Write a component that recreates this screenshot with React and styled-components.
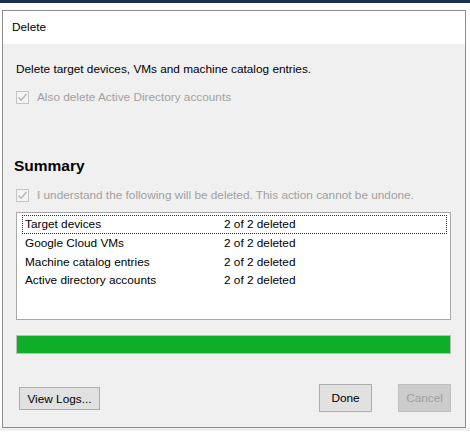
import React from "react";
import styled, { createGlobalStyle } from "styled-components";

const rows = [
  { name: "Target devices", status: "2 of 2 deleted" },
  { name: "Google Cloud VMs", status: "2 of 2 deleted" },
  { name: "Machine catalog entries", status: "2 of 2 deleted" },
  { name: "Active directory accounts", status: "2 of 2 deleted" },
];

function CheckBox() {
  return (
    <Box>
      <svg width="11" height="11" viewBox="0 0 11 11">
        <path d="M1.5 5.5 L4.2 8.2 L9.5 2" fill="none" stroke="#b4b4b4" strokeWidth="1.4" />
      </svg>
    </Box>
  );
}

function App() {
  return (
    <>
      <GlobalStyle />
      <TopStrip />
      <Page>
        <Dialog>
          <TitleBar>Delete</TitleBar>
          <Body>
            <Intro>Delete target devices, VMs and machine catalog entries.</Intro>
            <CheckRow top={13}>
              <CheckBox />
              <CheckLabel>Also delete Active Directory accounts</CheckLabel>
            </CheckRow>
            <Heading>Summary</Heading>
            <CheckRow top={13}>
              <CheckBox />
              <CheckLabel>I understand the following will be deleted. This action cannot be undone.</CheckLabel>
            </CheckRow>
            <ListBox>
              {rows.map((r, i) => (
                <ListRow key={r.name} focused={i === 0}>
                  <NameCell>{r.name}</NameCell>
                  <span>{r.status}</span>
                </ListRow>
              ))}
            </ListBox>
            <Progress>
              <ProgressFill style={{ width: "100%" }} />
            </Progress>
            <ButtonBar>
              <SmallButton>View Logs...</SmallButton>
              <Spacer />
              <Button>Done</Button>
              <Button disabled>Cancel</Button>
            </ButtonBar>
          </Body>
        </Dialog>
      </Page>
    </>
  );
}

const GlobalStyle = createGlobalStyle`
  body {
    margin: 0;
    background: #ffffff;
    font-family: "Liberation Sans", Arial, sans-serif;
    font-size: 11.8px;
    color: #000;
  }
`;

const TopStrip = styled.div`
  height: 3px;
  background: #1b2f4f;
`;

const Page = styled.div`
  padding: 7px 0 0 2px;
  height: 428px;
  box-sizing: border-box;
  background: linear-gradient(to bottom, #ffffff 0, #ffffff 425px, #f0f0f0 425px);
`;

const Dialog = styled.div`
  width: 464px;
  height: 418px;
  box-sizing: border-box;
  border: 1px solid #8c8c8c;
  display: flex;
  flex-direction: column;
  background: #f0f0f0;
`;

const TitleBar = styled.div`
  height: 33px;
  background: #ffffff;
  padding-left: 9px;
  line-height: 33px;
`;

const Body = styled.div`
  flex: 1;
  padding: 18px 14px 0 13px;
  display: flex;
  flex-direction: column;
`;

const Intro = styled.div`
  line-height: 15px;
`;

const CheckRow = styled.div`
  display: flex;
  align-items: center;
  gap: 8px;
  margin-top: ${(p) => p.top}px;
`;

const Box = styled.span`
  width: 13px;
  height: 13px;
  box-sizing: border-box;
  border: 1px solid #c4c4c4;
  background: #f4f4f4;
  display: flex;
  align-items: center;
  justify-content: center;
`;

const CheckLabel = styled.span`
  color: #a0a0a0;
  line-height: 15px;
`;

const Heading = styled.div`
  font-size: 15.5px;
  font-weight: bold;
  margin: 52px 0 0 -2px;
  line-height: 18px;
`;

const ListBox = styled.div`
  margin-top: 9px;
  height: 108px;
  box-sizing: border-box;
  border: 1px solid #a8a8a8;
  background: #ffffff;
  padding: 2px 3px 0 5px;
`;

const ListRow = styled.div`
  display: flex;
  height: 18.8px;
  line-height: 17px;
  box-sizing: border-box;
  padding-left: 2px;
  border: 1px dotted ${(p) => (p.focused ? "#333" : "transparent")};
`;

const NameCell = styled.span`
  width: 199px;
`;

const Progress = styled.div`
  margin-top: 15px;
  height: 19px;
  box-sizing: border-box;
  border: 1px solid #bcbcbc;
  background: #e6e6e6;
`;

const ProgressFill = styled.div`
  height: 100%;
  background: #0eae29;
`;

const ButtonBar = styled.div`
  margin-top: 30px;
  display: flex;
  align-items: flex-start;
  gap: 26px;
`;

const Spacer = styled.div`
  flex: 1;
`;

const SmallButton = styled.button`
  margin: 3px 0 0 3px;
  width: 81px;
  height: 23px;
  font-family: inherit;
  font-size: 11.8px;
  border: 1px solid #adadad;
  background: #e1e1e1;
  color: #000;
  padding: 0;
`;

const Button = styled.button`
  width: 53px;
  height: 28px;
  font-family: inherit;
  font-size: 11.8px;
  padding: 0;
  border: 1px solid ${(p) => (p.disabled ? "#bfbfbf" : "#adadad")};
  background: ${(p) => (p.disabled ? "#cccccc" : "#e1e1e1")};
  color: ${(p) => (p.disabled ? "#a0a0a0" : "#000")};
`;

export default App;
